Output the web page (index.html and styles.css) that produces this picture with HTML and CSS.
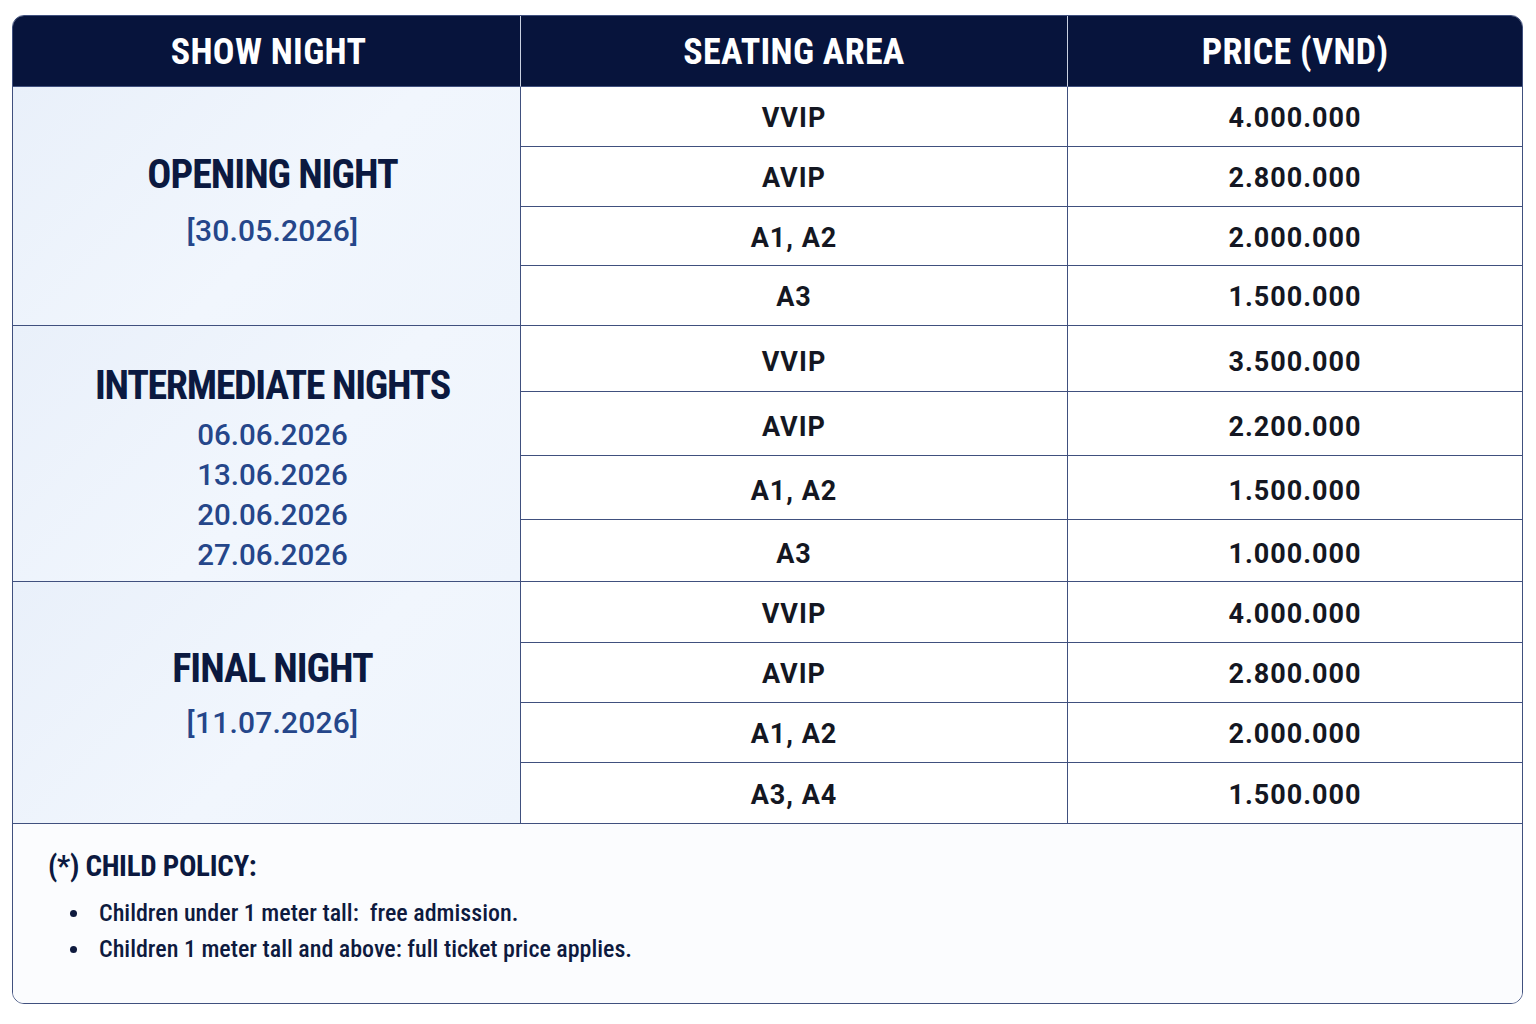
FILE: index.html
```html
<!DOCTYPE html>
<html lang="en">
<head>
<meta charset="utf-8">
<title>Ticket Prices</title>
<link rel="stylesheet" href="styles.css">
</head>
<body>
<div class="card">
  <div class="grid">
    <div class="hcell">SHOW NIGHT</div>
    <div class="hcell">SEATING AREA</div>
    <div class="hcell hlast">PRICE (VND)</div>

    <div class="night g1">
      <div class="title">OPENING NIGHT</div>
      <div class="date">[30.05.2026]</div>
    </div>
    <div class="cell">VVIP</div><div class="cell price">4.000.000</div>
    <div class="cell">AVIP</div><div class="cell price">2.800.000</div>
    <div class="cell">A1, A2</div><div class="cell price">2.000.000</div>
    <div class="cell">A3</div><div class="cell price">1.500.000</div>

    <div class="night g2">
      <div class="title">INTERMEDIATE NIGHTS</div>
      <div class="dates">
        <div class="date">06.06.2026</div>
        <div class="date">13.06.2026</div>
        <div class="date">20.06.2026</div>
        <div class="date">27.06.2026</div>
      </div>
    </div>
    <div class="cell mid">VVIP</div><div class="cell mid price">3.500.000</div>
    <div class="cell mid">AVIP</div><div class="cell mid price">2.200.000</div>
    <div class="cell mid">A1, A2</div><div class="cell mid price">1.500.000</div>
    <div class="cell mid">A3</div><div class="cell mid price">1.000.000</div>

    <div class="night g3">
      <div class="title">FINAL NIGHT</div>
      <div class="date">[11.07.2026]</div>
    </div>
    <div class="cell">VVIP</div><div class="cell price">4.000.000</div>
    <div class="cell">AVIP</div><div class="cell price">2.800.000</div>
    <div class="cell">A1, A2</div><div class="cell price">2.000.000</div>
    <div class="cell">A3, A4</div><div class="cell price">1.500.000</div>
  </div>

  <div class="policy">
    <div class="ptitle">(*) CHILD POLICY:</div>
    <ul class="plist">
      <li>Children under 1 meter tall:&nbsp; free admission.</li>
      <li>Children 1 meter tall and above: full ticket price applies.</li>
    </ul>
  </div>
</div>
</body>
</html>
```
FILE: styles.css
```css
* { box-sizing: border-box; }
html, body { margin: 0; padding: 0; background: #ffffff; }
body { font-family: "Roboto", "Liberation Sans", sans-serif; }

.card {
  width: 1511px;
  margin: 15px 0 0 12px;
  border: 1px solid #40507e;
  border-radius: 12px;
  overflow: hidden;
  background: #fbfcfe;
}

.grid {
  display: grid;
  grid-template-columns: 508px 547px 1fr;
  grid-template-rows: 71px 60px 60px 59px 60px 66px 64px 64px 62px 61px 60px 60px 61px;
}

.hcell {
  background: #07143c;
  color: #ffffff;
  font-family: "Roboto Condensed", "Roboto", sans-serif;
  font-weight: 700;
  font-size: 36px;
  letter-spacing: 0.3px;
  display: flex;
  align-items: center;
  justify-content: center;
  border-right: 1px solid #c9d0e0;
  border-bottom: 1px solid #40507e;
  padding-top: 2px;
}
.hcell:first-child { padding-left: 4px; }
.hlast { border-right: none; }

.night {
  grid-row: span 4;
  grid-column: 1;
  background: linear-gradient(135deg, #e9f0fa 0%, #f1f6fd 55%, #eef4fc 100%);
  border-right: 1px solid #40507e;
  border-bottom: 1px solid #40507e;
  display: flex;
  flex-direction: column;
  align-items: center;
  justify-content: center;
  padding-left: 12px;
}

.title {
  font-family: "Roboto Condensed", "Roboto", sans-serif;
  font-weight: 700;
  font-size: 40px;
  letter-spacing: -1px;
  color: #0b1940;
  line-height: 48px;
}

.date {
  font-family: "Roboto", sans-serif;
  font-weight: 500;
  font-size: 30px;
  letter-spacing: 0.2px;
  color: #25468a;
  line-height: 40px;
}

.g1 .title { margin-top: -10px; margin-bottom: 12px; }
.g3 .title { margin-top: -18px; margin-bottom: 10px; }
.g2 .title { margin-top: 29px; margin-bottom: 5px; letter-spacing: -1.3px; }
.g2 .date { line-height: 40px; letter-spacing: 0; font-size: 29.5px; }

.cell {
  background: #ffffff;
  display: flex;
  align-items: center;
  justify-content: center;
  font-family: "Roboto", sans-serif;
  font-weight: 700;
  font-size: 27px;
  letter-spacing: 1px;
  color: #141722;
  border-right: 1px solid #40507e;
  border-bottom: 1px solid #40507e;
  padding-top: 3px;
}
.cell.mid { padding-top: 6px; }
.cell.price { border-right: none; }

.policy {
  height: 179px;
  padding: 24px 0 0 35px;
  background: #fbfcfe;
}

.ptitle {
  font-family: "Roboto Condensed", "Roboto", sans-serif;
  font-weight: 700;
  font-size: 29px;
  letter-spacing: -0.3px;
  line-height: 36px;
  color: #0b1940;
}

.plist {
  list-style: none;
  margin: 11px 0 0 0;
  padding: 0;
}
.plist li {
  display: flex;
  align-items: center;
  gap: 22px;
  font-family: "Roboto Condensed", "Roboto", sans-serif;
  font-weight: 500;
  font-size: 24px;
  line-height: 36px;
  color: #0e1a3e;
}
.plist li::before {
  content: "";
  width: 7px;
  height: 7px;
  border-radius: 50%;
  background: #0e1a3e;
  margin-left: 22px;
  flex: none;
}
```
